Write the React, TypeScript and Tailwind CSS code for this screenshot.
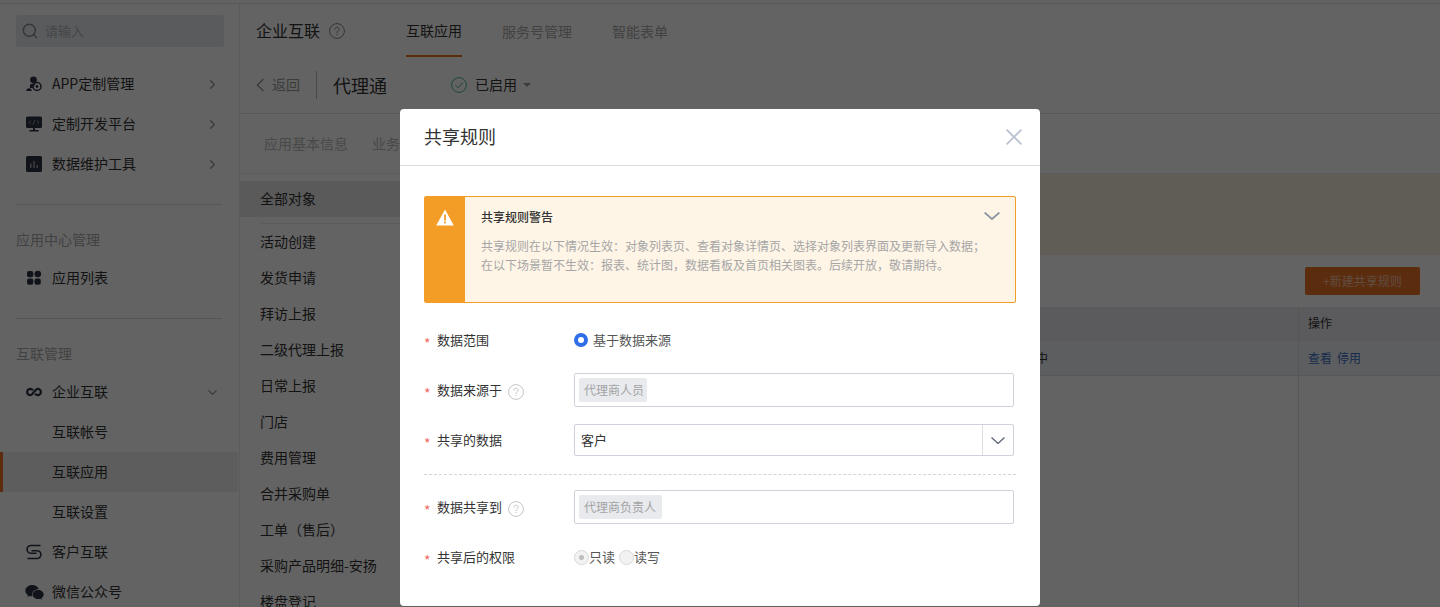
import React from "react";
import { ChevronRight, ChevronDown } from "lucide-react";

const font = "font-['Noto_Sans_CJK_SC','Noto_Sans',sans-serif]";

function HelpIcon({ className }: { className: string }) {
  return (
    <svg viewBox="0 0 16 16" className={className} fill="none" stroke="currentColor">
      <circle cx="8" cy="8" r="7.400" strokeWidth="1" />
      <path d="M5.900 6.200c0-1.200 1-2 2.100-2s2.100.8 2.100 1.900c0 1.700-2.100 1.700-2.100 3.500" strokeWidth="1" strokeLinecap="round" />
      <circle cx="8" cy="11.600" r=".7" fill="currentColor" stroke="none" />
    </svg>
  );
}

function AppIcon() {
  return (
    <svg viewBox="0 0 16 16" className="w-4 h-4 text-[#2b3443]" fill="currentColor">
      <circle cx="7.500" cy="3.800" r="3.400" />
      <path d="M4 8.500c1-.8 4-1 5.500-.5L6.500 12H4z" />
      <path d="M.3 15c0-1.800 1-2.800 2.700-2.800 1.300 0 2 .6 2.400 1.500l.5 1.300z" />
      <circle cx="11" cy="10.500" r="4" fill="none" stroke="currentColor" strokeWidth="1.500" />
      <circle cx="11" cy="10.500" r="1.400" />
    </svg>
  );
}
function DevIcon() {
  return (
    <svg viewBox="0 0 16 16" className="w-4 h-4 text-[#2b3443]">
      <rect x="0" y="0.500" width="16" height="11.500" rx="1.500" fill="currentColor" />
      <rect x="7" y="12" width="2" height="2" fill="currentColor" />
      <rect x="3.500" y="14" width="9" height="1.500" fill="currentColor" />
      <path d="M4.800 4.500 3 6.300l1.800 1.700M11.200 4.500 13 6.300l-1.800 1.700M9 3.800 7 8.800" stroke="#999" strokeWidth="1" fill="none" />
    </svg>
  );
}
function ChartIcon() {
  return (
    <svg viewBox="0 0 16 16" className="w-4 h-4 text-[#2b3443]">
      <rect width="16" height="16" rx="1.500" fill="currentColor" />
      <rect x="4" y="7.500" width="1.600" height="4.500" fill="#999" />
      <rect x="7.200" y="5" width="1.600" height="7" fill="#999" />
      <rect x="10.400" y="9" width="1.600" height="3" fill="#999" />
    </svg>
  );
}
function GridIcon() {
  return (
    <svg viewBox="0 0 16 16" className="w-4 h-4 text-[#2b3443]" fill="currentColor">
      <rect x="1" y="1" width="6.300" height="6.300" rx="2" />
      <circle cx="11.800" cy="4" r="3.300" />
      <rect x="1" y="8.500" width="6.300" height="6.300" rx="2" />
      <rect x="8.500" y="8.500" width="6.300" height="6.300" rx="2" />
    </svg>
  );
}
function LoopIcon() {
  return (
    <svg viewBox="0 0 16 16" className="w-4 h-4 text-[#2b3443]" fill="none" stroke="currentColor" strokeWidth="2.200">
      <path d="M7 6.200C6 5.200 5 4.800 4.300 4.800A3.200 3.200 0 0 0 4.300 11.200C6.800 11.200 9 4.800 11.700 4.800A3.200 3.200 0 0 1 11.700 11.200C11 11.200 10 10.800 9 9.800" />
    </svg>
  );
}
function SIcon() {
  return (
    <svg viewBox="0 0 16 16" className="w-4 h-4 text-[#2b3443]" fill="none" stroke="currentColor" strokeWidth="1.600">
      <path d="M14.500 1.500H5a3.900 3.900 0 0 0 0 7.800h5.500" />
      <path d="M1.500 14.500H11a3.900 3.900 0 0 0 0-7.800H5.500" />
    </svg>
  );
}
function WechatIcon() {
  return (
    <svg viewBox="0 0 18 16" className="w-[19px] h-[17px] text-[#2b3443]" fill="currentColor">
      <path d="M6.800 1C3.200 1 .3 3.400.3 6.300c0 1.700 1 3.200 2.500 4.200l-.6 1.800 2.200-1.100c.7.200 1.500.3 2.300.3h.4c-.2-.5-.3-1-.3-1.500 0-2.800 2.600-5 5.900-5h.4C12.500 2.700 9.900 1 6.800 1z" />
      <path d="M17.700 9.900c0-2.400-2.400-4.300-5.200-4.300-2.900 0-5.200 1.900-5.200 4.300s2.300 4.300 5.200 4.300c.6 0 1.200-.1 1.800-.3l1.700 1-.5-1.500c1.300-.8 2.200-2 2.200-3.500z" />
    </svg>
  );
}

function NavItem({ icon, label, arrow, active }: { icon?: React.ReactNode; label: string; arrow?: "right" | "down"; active?: boolean }) {
  return (
    <div className={`h-10 w-[238px] flex items-center text-sm text-[#333] ${active ? "bg-[#f0f0f0] border-l-[3px] border-[#ec7124]" : "border-l-[3px] border-transparent"}`}>
      <span className="w-[22px] ml-[20px] mr-[7px] flex justify-center shrink-0">{icon}</span>
      <span className="pb-[2px]">{label}</span>
      {arrow === "right" && <ChevronRight className="ml-auto mr-[18px] w-[15px] h-[15px] text-[#999]" />}
      {arrow === "down" && <ChevronDown className="ml-auto mr-[18px] w-[15px] h-[15px] text-[#999]" />}
    </div>
  );
}

function Label({ text, help }: { text: string; help?: boolean }) {
  return (
    <div className="w-[150px] shrink-0 flex items-center text-[13px] text-[#333]">
      <span className="w-[13px] h-[12px] leading-[18px] text-[#f2695f] text-[14px]">*</span>
      <span>{text}</span>
      {help && <HelpIcon className="w-4 h-4 ml-[6px] mt-[3px] text-[#c4c4c4]" />}
    </div>
  );
}

function TagInput({ text, pad }: { text: string; pad: string }) {
  return (
    <div className="w-[440px] h-[34px] border border-[#cfd2da] rounded-[2px] flex items-center pl-1">
      <span className={`h-6 pl-[5px] ${pad} bg-[#e8eaee] rounded-[2px] text-xs leading-6 text-[#a3a3a3]`}>{text}</span>
    </div>
  );
}

export default function App() {
  const objects = ["活动创建", "发货申请", "拜访上报", "二级代理上报", "日常上报", "门店", "费用管理", "合并采购单", "工单（售后）", "采购产品明细-安扬", "楼盘登记"];
  return (
    <div className={`relative h-[607px] w-[1440px] overflow-hidden bg-white ${font}`}>
      <div className="h-[4px] border-b border-[#ddd] bg-white" />
      <div className="flex h-[603px]">
        {/* Sidebar */}
        <aside className="w-[240px] shrink-0 border-r border-[#eee]">
          <div className="mx-4 mt-[11px] h-8 w-[208px] rounded-[2px] bg-[#e8ebf0] flex items-center pl-[6px] text-[13px] text-[#b4b4b4]">
            <svg viewBox="0 0 16 16" className="w-4 h-4 text-[#8d8d8d] mr-[7px]" fill="none" stroke="currentColor" strokeWidth="1.500">
              <circle cx="7.300" cy="7.300" r="6" />
              <path d="m11.800 11.800 3.200 3.200" />
            </svg>
            请输入
          </div>
          <div className="mt-[17px]">
            <NavItem icon={<AppIcon />} label="APP定制管理" arrow="right" />
            <NavItem icon={<DevIcon />} label="定制开发平台" arrow="right" />
            <NavItem icon={<ChartIcon />} label="数据维护工具" arrow="right" />
          </div>
          <div className="mx-4 mt-5 w-[206px] border-t border-[#ddd]" />
          <div className="mt-4 h-[37px] pl-4 pb-[2px] flex items-center text-sm text-[#aaa]">应用中心管理</div>
          <NavItem icon={<GridIcon />} label="应用列表" />
          <div className="mx-4 mt-5 w-[206px] border-t border-[#ddd]" />
          <div className="mt-4 h-[37px] pl-4 pb-[2px] flex items-center text-sm text-[#aaa]">互联管理</div>
          <NavItem icon={<LoopIcon />} label="企业互联" arrow="down" />
          <NavItem label="互联帐号" />
          <NavItem label="互联应用" active />
          <NavItem label="互联设置" />
          <NavItem icon={<SIcon />} label="客户互联" />
          <NavItem icon={<WechatIcon />} label="微信公众号" />
        </aside>

        {/* Main */}
        <main className="flex-1 min-w-0">
          <div className="h-[53px] flex items-center pl-4">
            <span className="text-base text-[#333] w-[64px] pb-[2px]">企业互联</span>
            <HelpIcon className="w-4 h-4 ml-[9px] text-[#888]" />
            <div className="ml-[61px] flex h-full text-sm text-[#aaa]">
              <span className="h-full flex items-center border-b-2 border-[#ec7124] text-[#333]">互联应用</span>
              <span className="ml-10 flex items-center">服务号管理</span>
              <span className="ml-10 flex items-center">智能表单</span>
            </div>
          </div>
          <div className="h-[57px] border-b border-[#e4e4e4] flex items-center pl-4">
            <svg viewBox="0 0 8 14" className="w-2 h-[14px] text-[#999]" fill="none" stroke="currentColor" strokeWidth="1.300">
              <path d="M7.500 1 1.300 7l6.200 6" />
            </svg>
            <span className="ml-2 text-sm text-[#999] pb-[2px]">返回</span>
            <div className="ml-4 h-7 border-l border-[#bbb]" />
            <span className="ml-4 text-lg text-[#333]">代理通</span>
            <svg viewBox="0 0 16 16" className="ml-[64px] w-4 h-4 text-[#3fb98a]" fill="none" stroke="currentColor">
              <circle cx="8" cy="8" r="7.400" />
              <path d="m4.500 8.200 2.500 2.500 4.800-5" />
            </svg>
            <span className="ml-2 text-sm text-[#333] pb-[2px]">已启用</span>
            <span className="ml-[6px] border-x-[4px] border-t-[4px] border-x-transparent border-t-[#999]" />
          </div>
          <div className="h-[60px] border-b border-[#eee] flex items-center pl-6 pb-[2px] text-sm text-[#bbb]">
            <span>应用基本信息</span>
            <span className="ml-6">业务规则</span>
          </div>
          <div className="flex">
            <div className="w-[160px] shrink-0 pt-[7px]">
              <div className="h-9 bg-[#e8e8e8] pl-5 pb-[2px] flex items-center text-sm text-[#333]">全部对象</div>
              <div className="ml-5 mt-[6px] border-t border-[#eee]" />
              {objects.map((o) => (
                <div key={o} className="h-9 pl-5 pb-[2px] flex items-center text-sm text-[#333] whitespace-nowrap">{o}</div>
              ))}
            </div>
            <div className="flex-1 min-w-0">
              <div className="h-[81px] bg-[#f5efdd]" />
              <div className="mt-3 h-7 flex justify-end pr-5">
                <button className="w-[115px] h-7 rounded-[2px] bg-[#ec7124] text-xs text-white/60">+新建共享规则</button>
              </div>
              <div className="mt-3 h-[34px] bg-[#e9ebef] flex text-xs text-[#333]">
                <div className="flex-1" />
                <div className="w-[142px] border-l border-[#ddd] pl-[9px] pb-[2px] flex items-center">操作</div>
              </div>
              <div className="h-[35px] bg-[#f0f2f8] border-b border-[#dfe1ea] flex text-xs text-[#333]">
                <div className="flex-1 flex items-center justify-end pr-[250px]">启用中</div>
                <div className="w-[142px] border-l border-[#dfe1ea] pl-[9px] flex items-center gap-[5px] text-[#3b6fc4]">
                  <span>查看</span><span>停用</span>
                </div>
              </div>
              <div className="h-[300px] flex justify-end">
                <div className="w-[142px] border-l border-[#dfe1ea]" />
              </div>
            </div>
          </div>
        </main>
      </div>

      {/* Mask */}
      <div className="absolute inset-0 bg-black/[0.61]" />

      {/* Dialog */}
      <div className="absolute left-[400px] top-[109px] w-[640px] h-[497px] bg-white rounded-[4px]">
        <div className="h-[57px] border-b border-[#dcdcdc] flex items-center justify-between pl-6 pr-[18px]">
          <span className="text-lg text-[#333] pb-[2px]">共享规则</span>
          <svg viewBox="0 0 16 16" className="w-4 h-4 text-[#b9c0cf]" fill="none" stroke="currentColor" strokeWidth="1.700">
            <path d="m.6.6 14.800 14.800M15.400.6.600 15.400" />
          </svg>
        </div>
        <div className="px-6">
          <div className="mt-[30px] h-[107px] border border-[#f39d26] rounded-[2px] bg-[#fef5e6] flex overflow-hidden">
            <div className="w-10 bg-[#f39d26] shrink-0 flex justify-center pt-[12px]">
              <svg viewBox="0 0 18 17" className="w-[18px] h-[17px]">
                <path d="M9 .5 17.800 16.500H.2z" fill="#fff" />
                <rect x="8.100" y="5.500" width="1.800" height="6" fill="#f39d26" />
                <rect x="8.100" y="12.500" width="1.800" height="1.800" fill="#f39d26" />
              </svg>
            </div>
            <div className="flex-1 pl-4 pt-[11px]">
              <div className="flex items-center justify-between pr-[15px]">
                <span className="text-xs leading-[18px] text-[#333] font-medium">共享规则警告</span>
                <svg viewBox="0 0 16 8" className="w-4 h-2 mb-[2px] text-[#8a93a3]" fill="none" stroke="currentColor" strokeWidth="1.800">
                  <path d="m.6.6 7.400 6.400L15.400.6" />
                </svg>
              </div>
              <div className="mt-[10px] text-xs leading-[19px] text-[#a6a6a6] whitespace-nowrap">
                <div>共享规则在以下情况生效：对象列表页、查看对象详情页、选择对象列表界面及更新导入数据；</div>
                <div>在以下场景暂不生效：报表、统计图，数据看板及首页相关图表。后续开放，敬请期待。</div>
              </div>
            </div>
          </div>

          <div className="mt-[26px] h-[22px] flex items-center">
            <Label text="数据范围" />
            <span className="w-[14px] h-[14px] rounded-full border-[4px] border-[#2f6fe8] bg-white" />
            <span className="ml-[5px] text-[13px] text-[#555]">基于数据来源</span>
          </div>
          <div className="mt-[22px] flex items-center">
            <Label text="数据来源于" help />
            <TagInput text="代理商人员" pad="pr-[3px]" />
          </div>
          <div className="mt-[17px] flex items-center">
            <Label text="共享的数据" />
            <div className="w-[440px] h-8 border border-[#cfd2da] rounded-[2px] flex items-center text-[13px] text-[#333]">
              <span className="flex-1 pl-[6px]">客户</span>
              <span className="w-[31px] h-full border-l border-[#dcdee4] flex items-center justify-center">
                <svg viewBox="0 0 14 7" className="w-[14px] h-[7px] text-[#5c6678]" fill="none" stroke="currentColor" strokeWidth="1.300">
                  <path d="m.5.5 6.500 6 6.500-6" />
                </svg>
              </span>
            </div>
          </div>
          <div className="mt-[18px] border-t border-dashed border-[#d4d4d4]" />
          <div className="mt-[15px] flex items-center">
            <Label text="数据共享到" help />
            <TagInput text="代理商负责人" pad="pr-[6px]" />
          </div>
          <div className="mt-[22px] h-[22px] flex items-center">
            <Label text="共享后的权限" />
            <span className="w-[15px] h-[15px] rounded-full border border-[#d8d8d8] bg-[#f2f2f2] flex items-center justify-center">
              <span className="w-[5px] h-[5px] rounded-full bg-[#bdbdbd]" />
            </span>
            <span className="text-[13px] text-[#555]">只读</span>
            <span className="ml-1 w-[15px] h-[15px] rounded-full border border-[#d8d8d8] bg-[#f2f2f2]" />
            <span className="text-[13px] text-[#555]">读写</span>
          </div>
        </div>
      </div>
    </div>
  );
}
